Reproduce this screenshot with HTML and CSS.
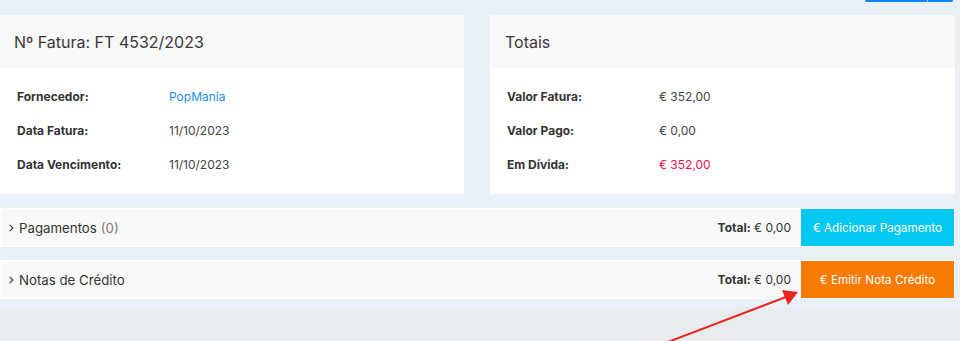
FILE: index.html
```html
<!DOCTYPE html>
<html lang="pt">
<head>
    <meta charset="UTF-8">
    <title>Fatura FT 4532/2023</title>
    <link rel="stylesheet" href="styles.css">
</head>
<body>

<div class="content">
    <div class="toolbar">
        <div class="btn-group">
            <span class="btn-top"></span>
            <span class="btn-top small"></span>
        </div>
    </div>

    <div class="cards">
        <div class="card">
            <div class="card-header">Nº Fatura: FT 4532/2023</div>
            <div class="card-body">
                <span class="label">Fornecedor:</span>
                <a class="value link" href="#">PopMania</a>
                <span class="label">Data Fatura:</span>
                <span class="value">11/10/2023</span>
                <span class="label">Data Vencimento:</span>
                <span class="value">11/10/2023</span>
            </div>
        </div>
        <div class="card">
            <div class="card-header">Totais</div>
            <div class="card-body">
                <span class="label">Valor Fatura:</span>
                <span class="value">€ 352,00</span>
                <span class="label">Valor Pago:</span>
                <span class="value">€ 0,00</span>
                <span class="label">Em Dívida:</span>
                <span class="value debt">€ 352,00</span>
            </div>
        </div>
    </div>

    <div class="panel">
        <div class="panel-title">
            <svg class="chevron" width="5" height="8" viewBox="0 0 5 8"><polyline points="0.7,0.8 4,4 0.7,7.2" fill="none" stroke="#333" stroke-width="1.1"/></svg>
            Pagamentos <span class="count">(0)</span>
        </div>
        <div class="panel-total"><b>Total:</b> € 0,00</div>
        <button class="btn btn-info">€ Adicionar Pagamento</button>
    </div>

    <div class="panel">
        <div class="panel-title">
            <svg class="chevron" width="5" height="8" viewBox="0 0 5 8"><polyline points="0.7,0.8 4,4 0.7,7.2" fill="none" stroke="#333" stroke-width="1.1"/></svg>
            Notas de Crédito
        </div>
        <div class="panel-total"><b>Total:</b> € 0,00</div>
        <button class="btn btn-orange">€ Emitir Nota Crédito</button>
    </div>
</div>

<div class="footer"></div>

<!-- annotation arrow -->
<svg class="arrow" width="960" height="341" viewBox="0 0 960 341">
    <line x1="668" y1="342" x2="786" y2="297" stroke="#e8261f" stroke-width="2"/>
    <polygon points="798,292 782,290 788,305" fill="#e8261f"/>
</svg>

</body>
</html>
```

FILE: styles.css
```css
body {
    margin: 0;
    font-family: Inter, "Noto Sans", sans-serif;
    background-color: #e9ecef;
    color: #333;
    position: relative;
    height: 341px;
    overflow: hidden;
}
.content {
    background-color: #e9f0f8;
    width: 955px;
    padding-right: 5px;
    padding-bottom: 9px;
}
.toolbar {
    height: 2px;
    display: flex;
    justify-content: flex-end;
    padding-right: 2px;
    overflow: hidden;
}
.btn-group {
    display: flex;
    gap: 1px;
    background-color: #b8d8ff;
}
.btn-top {
    display: block;
    width: 62px;
    height: 2px;
    background-color: #0b84ff;
    border-bottom-left-radius: 2px;
}
.btn-top.small {
    width: 25px;
    border-radius: 0 0 2px 0;
}
.cards {
    display: grid;
    grid-template-columns: 464px 465px;
    gap: 26px;
    margin-top: 13px;
}
.card {
    background-color: #fff;
    height: 179px;
}
.card-header {
    background-color: #f9f9f9;
    height: 53px;
    line-height: 54px;
    padding-left: 14px;
    font-size: 16px;
    color: #383838;
}
.card:nth-child(2) .card-header {
    padding-left: 15px;
}
.card-body {
    display: grid;
    grid-template-columns: 152px 1fr;
    grid-auto-rows: 34px;
    align-items: center;
    padding: 11px 17px 0 17px;
    font-size: 12px;
}
.label {
    font-weight: 700;
    color: #333;
}
.value {
    color: #444;
}
.link {
    color: #1b8df0;
    text-decoration: none;
}
.debt {
    color: #f0124d;
}
.panel {
    display: flex;
    align-items: center;
    background-color: #f9f9f9;
    border: 1px solid #fff;
    height: 37px;
    margin-top: 13px;
}
.cards + .panel {
    margin-top: 14px;
}
.panel-title {
    flex: 1;
    display: flex;
    align-items: center;
    padding-left: 8px;
    font-size: 13.25px;
    color: #333;
}
.chevron {
    margin-right: 5px;
    margin-top: 1px;
}
.count {
    color: #777;
    margin-left: 4px;
}
.panel-total {
    font-size: 12px;
    color: #333;
    margin-right: 10px;
}
.btn {
    width: 153px;
    height: 37px;
    border: none;
    font-family: Inter, "Noto Sans", sans-serif;
    font-size: 11.7px;
    color: #fff;
    padding: 0;
    cursor: pointer;
}
.btn-info {
    background-color: #02c8f4;
}
.btn-orange {
    background-color: #f97a00;
}
.footer {
    height: 31px;
}
.arrow {
    position: absolute;
    left: 0;
    top: 0;
    pointer-events: none;
}
```
